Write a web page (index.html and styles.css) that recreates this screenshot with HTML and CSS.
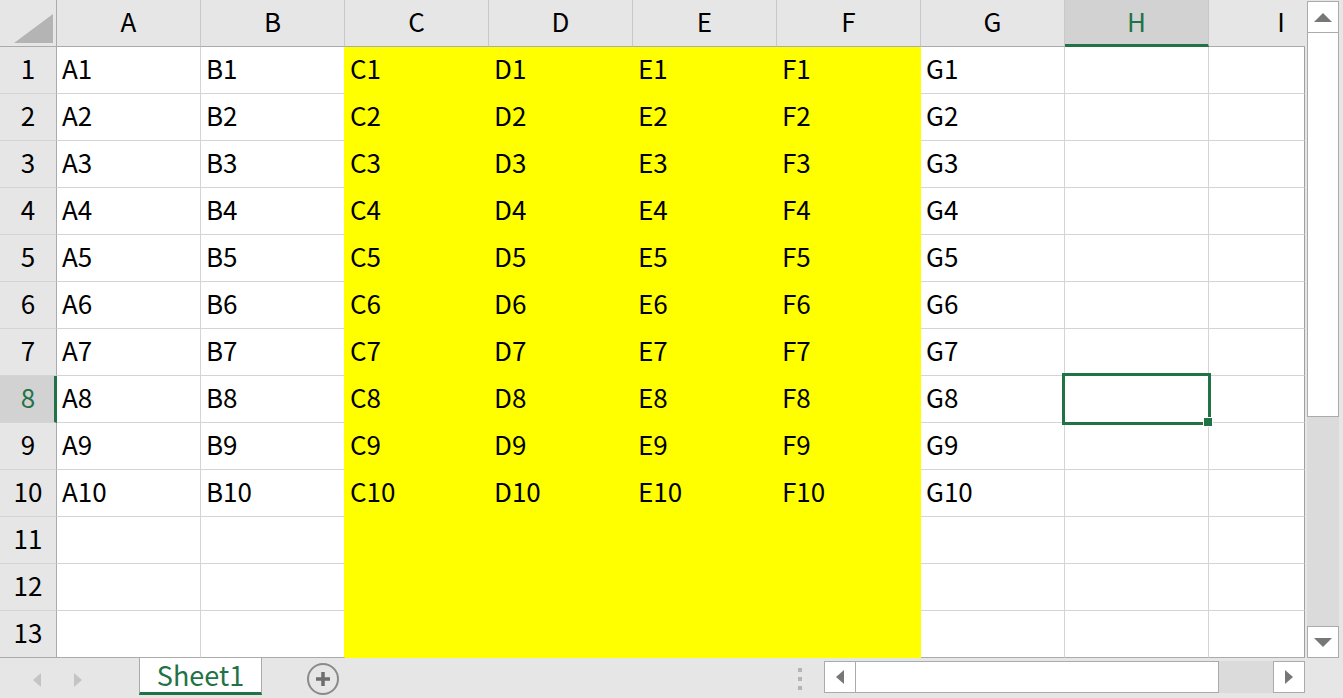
FILE: index.html
```html
<!DOCTYPE html>
<html lang="ja">
<head>
    <meta charset="UTF-8">
    <title>Book1 - Excel</title>
    <link rel="stylesheet" href="styles.css">
</head>
<body>
    <div class="app">
        <div class="main">
            <!-- シート本体 -->
            <div class="sheet">
                <div class="corner">
                    <svg width="57" height="46" viewBox="0 0 57 46"><polygon points="53,14 53,43 14,43" fill="#b4b4b4"/></svg>
                </div>
                <div class="colhead">A</div>
                <div class="colhead">B</div>
                <div class="colhead">C</div>
                <div class="colhead">D</div>
                <div class="colhead">E</div>
                <div class="colhead">F</div>
                <div class="colhead">G</div>
                <div class="colhead active">H</div>
                <div class="colhead last">I</div>

                <div class="rowhead">1</div>
                <div class="cell">A1</div><div class="cell pre-fill">B1</div>
                <div class="cell fill">C1</div><div class="cell fill">D1</div><div class="cell fill">E1</div><div class="cell fill">F1</div>
                <div class="cell">G1</div><div class="cell"></div><div class="cell edge"></div>

                <div class="rowhead">2</div>
                <div class="cell">A2</div><div class="cell pre-fill">B2</div>
                <div class="cell fill">C2</div><div class="cell fill">D2</div><div class="cell fill">E2</div><div class="cell fill">F2</div>
                <div class="cell">G2</div><div class="cell"></div><div class="cell edge"></div>

                <div class="rowhead">3</div>
                <div class="cell">A3</div><div class="cell pre-fill">B3</div>
                <div class="cell fill">C3</div><div class="cell fill">D3</div><div class="cell fill">E3</div><div class="cell fill">F3</div>
                <div class="cell">G3</div><div class="cell"></div><div class="cell edge"></div>

                <div class="rowhead">4</div>
                <div class="cell">A4</div><div class="cell pre-fill">B4</div>
                <div class="cell fill">C4</div><div class="cell fill">D4</div><div class="cell fill">E4</div><div class="cell fill">F4</div>
                <div class="cell">G4</div><div class="cell"></div><div class="cell edge"></div>

                <div class="rowhead">5</div>
                <div class="cell">A5</div><div class="cell pre-fill">B5</div>
                <div class="cell fill">C5</div><div class="cell fill">D5</div><div class="cell fill">E5</div><div class="cell fill">F5</div>
                <div class="cell">G5</div><div class="cell"></div><div class="cell edge"></div>

                <div class="rowhead">6</div>
                <div class="cell">A6</div><div class="cell pre-fill">B6</div>
                <div class="cell fill">C6</div><div class="cell fill">D6</div><div class="cell fill">E6</div><div class="cell fill">F6</div>
                <div class="cell">G6</div><div class="cell"></div><div class="cell edge"></div>

                <div class="rowhead">7</div>
                <div class="cell">A7</div><div class="cell pre-fill">B7</div>
                <div class="cell fill">C7</div><div class="cell fill">D7</div><div class="cell fill">E7</div><div class="cell fill">F7</div>
                <div class="cell">G7</div><div class="cell"></div><div class="cell edge"></div>

                <div class="rowhead active">8</div>
                <div class="cell">A8</div><div class="cell pre-fill">B8</div>
                <div class="cell fill">C8</div><div class="cell fill">D8</div><div class="cell fill">E8</div><div class="cell fill">F8</div>
                <div class="cell">G8</div>
                <div class="cell selected"><span class="sel-box"></span><span class="sel-handle"></span></div>
                <div class="cell edge"></div>

                <div class="rowhead">9</div>
                <div class="cell">A9</div><div class="cell pre-fill">B9</div>
                <div class="cell fill">C9</div><div class="cell fill">D9</div><div class="cell fill">E9</div><div class="cell fill">F9</div>
                <div class="cell">G9</div><div class="cell"></div><div class="cell edge"></div>

                <div class="rowhead">10</div>
                <div class="cell">A10</div><div class="cell pre-fill">B10</div>
                <div class="cell fill">C10</div><div class="cell fill">D10</div><div class="cell fill">E10</div><div class="cell fill">F10</div>
                <div class="cell">G10</div><div class="cell"></div><div class="cell edge"></div>

                <div class="rowhead">11</div>
                <div class="cell"></div><div class="cell pre-fill"></div>
                <div class="cell fill"></div><div class="cell fill"></div><div class="cell fill"></div><div class="cell fill"></div>
                <div class="cell"></div><div class="cell"></div><div class="cell edge"></div>

                <div class="rowhead">12</div>
                <div class="cell"></div><div class="cell pre-fill"></div>
                <div class="cell fill"></div><div class="cell fill"></div><div class="cell fill"></div><div class="cell fill"></div>
                <div class="cell"></div><div class="cell"></div><div class="cell edge"></div>

                <div class="rowhead bottom">13</div>
                <div class="cell bottom"></div><div class="cell pre-fill bottom"></div>
                <div class="cell fill"></div><div class="cell fill"></div><div class="cell fill"></div><div class="cell fill"></div>
                <div class="cell bottom"></div><div class="cell bottom"></div><div class="cell edge bottom"></div>
            </div>

            <!-- 縦スクロールバー -->
            <div class="vscroll">
                <div class="sbtn">
                    <svg width="18" height="9" viewBox="0 0 18 9"><polygon points="9,0 18,9 0,9" fill="#777"/></svg>
                </div>
                <div class="vthumb"></div>
                <div class="vtrack"></div>
                <div class="sbtn">
                    <svg width="18" height="9" viewBox="0 0 18 9"><polygon points="0,0 18,0 9,9" fill="#777"/></svg>
                </div>
            </div>
        </div>

        <!-- シートタブ -->
        <div class="bottombar">
            <div class="nav">
                <svg width="8" height="14" viewBox="0 0 8 14"><polygon points="8,0 8,14 0,7" fill="#c4c4c4"/></svg>
                <svg width="8" height="14" viewBox="0 0 8 14"><polygon points="0,0 0,14 8,7" fill="#c4c4c4"/></svg>
            </div>
            <div class="tab">Sheet1</div>
            <div class="addsheet">
                <svg width="34" height="34" viewBox="0 0 34 34">
                    <circle cx="17" cy="17" r="15" fill="none" stroke="#8a8a8a" stroke-width="2"/>
                    <path d="M17 10 V24 M10 17 H24" stroke="#6e6e6e" stroke-width="3.5"/>
                </svg>
            </div>
            <div class="spacer"></div>
            <div class="grip"><span></span><span></span><span></span></div>
            <div class="hscroll">
                <div class="sbtn">
                    <svg width="8" height="14" viewBox="0 0 8 14"><polygon points="8,0 8,14 0,7" fill="#777"/></svg>
                </div>
                <div class="hthumb"></div>
                <div class="htrack"></div>
                <div class="sbtn">
                    <svg width="8" height="14" viewBox="0 0 8 14"><polygon points="0,0 0,14 8,7" fill="#777"/></svg>
                </div>
            </div>
        </div>
    </div>
</body>
</html>
```

FILE: styles.css
```css
/* Excel風シート */
body {
    margin: 0;
    background: #e6e6e6;
    font-family: "Noto Sans CJK JP", "Noto Sans", sans-serif;
    color: #000;
    overflow: hidden;
}

.app {
    width: 1343px;
    height: 698px;
}

.main {
    display: flex;
    height: 658px;
}

.sheet {
    display: grid;
    grid-template-columns: 57px repeat(8, 144px) 96px;
    grid-auto-rows: 47px;
    width: 1305px;
    background: #fff;
}

.sheet > div {
    box-sizing: border-box;
    font-size: 26px;
    line-height: 42px;
    white-space: nowrap;
}

.corner {
    background: #e6e6e6;
    border-right: 1px solid #ababab;
    border-bottom: 1px solid #ababab;
}

.corner svg {
    display: block;
}

.colhead {
    background: #e6e6e6;
    text-align: center;
    border-right: 1px solid #c8c8c8;
    border-bottom: 1px solid #ababab;
}

.colhead.active {
    background: #d2d2d2;
    color: #217346;
    border-bottom: 3px solid #217346;
}

.colhead.last {
    border-right: none;
    padding-left: 48px;
}

.rowhead {
    background: #e6e6e6;
    text-align: center;
    border-right: 1px solid #ababab;
    border-bottom: 1px solid #d4d4d4;
}

.rowhead.active {
    background: #d2d2d2;
    color: #217346;
    border-right: 3px solid #217346;
    padding-left: 2px;
}

.cell {
    padding-left: 5px;
    border-right: 1px solid #d4d4d4;
    border-bottom: 1px solid #d4d4d4;
}

.cell.pre-fill {
    border-right-color: #ffff00;
}

.cell.fill {
    background: #ffff00;
    border-color: #ffff00;
}

.cell.edge {
    border-right-color: #a0a0a0;
}

.cell.bottom,
.rowhead.bottom {
    border-bottom-color: #ababab;
}

.cell.selected {
    position: relative;
}

.sel-box {
    position: absolute;
    left: -3px;
    top: -3px;
    right: -3px;
    bottom: -3px;
    border: 3px solid #217346;
}

.sel-handle {
    position: absolute;
    right: -5px;
    bottom: -5px;
    width: 8px;
    height: 8px;
    background: #217346;
    border: 1px solid #fff;
}

/* スクロールバー */
.vscroll {
    display: flex;
    flex-direction: column;
    width: 38px;
    box-sizing: border-box;
    padding: 1px 4px 0 2px;
}

.sbtn {
    display: flex;
    align-items: center;
    justify-content: center;
    box-sizing: border-box;
    width: 32px;
    height: 32px;
    background: #fff;
    border: 1px solid #ababab;
    flex: none;
}

.vthumb {
    height: 384px;
    background: #fff;
    border: 1px solid #ababab;
    border-top: none;
    box-sizing: border-box;
}

.vtrack {
    flex: 1;
    background: #dbdbdb;
}

.bottombar {
    display: flex;
    align-items: flex-start;
    height: 40px;
}

.nav {
    display: flex;
    gap: 33px;
    width: 139px;
    padding: 15px 0 0 33px;
    box-sizing: border-box;
}

.tab {
    width: 123px;
    height: 37px;
    box-sizing: border-box;
    background: #fff;
    border-left: 1px solid #ababab;
    border-right: 1px solid #ababab;
    border-bottom: 3px solid #217346;
    color: #217346;
    font-size: 27px;
    line-height: 34px;
    text-align: center;
}

.addsheet {
    padding: 4px 0 0 44px;
}

.addsheet svg {
    display: block;
}

.spacer {
    flex: 1;
}

.grip {
    display: flex;
    flex-direction: column;
    gap: 5px;
    padding: 10px 22px 0 0;
}

.grip span {
    width: 4px;
    height: 4px;
    background: #b4b4b4;
}

.hscroll {
    display: flex;
    width: 481px;
    margin: 3px 38px 0 0;
}

.hthumb {
    width: 363px;
    height: 32px;
    box-sizing: border-box;
    background: #fff;
    border: 1px solid #ababab;
    border-left: none;
}

.htrack {
    flex: 1;
    height: 32px;
    background: #dbdbdb;
}
```
